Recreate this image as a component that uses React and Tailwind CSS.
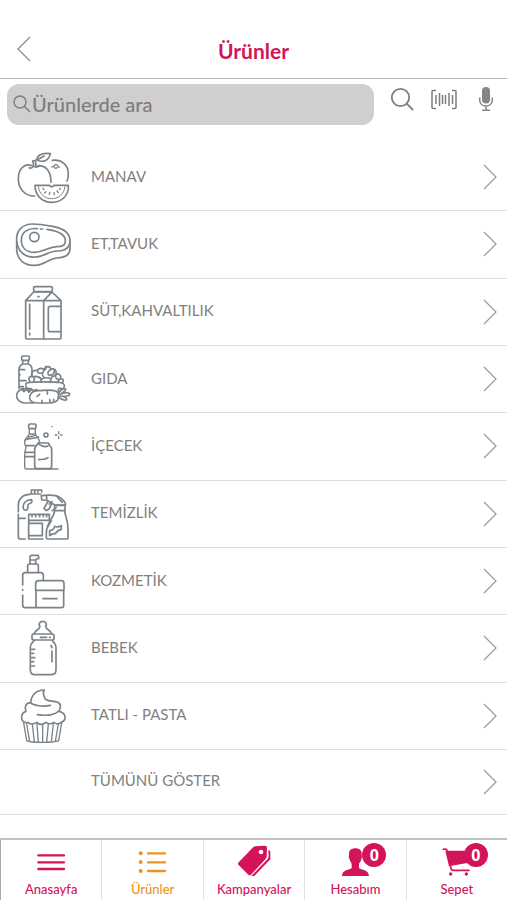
import React from "react";

function LineIcon({ viewBox, children }) {
  return (
    <svg
      viewBox={viewBox}
      className="w-20 h-[66px] shrink-0"
      fill="none"
      stroke="#7b8389"
      strokeWidth="5"
      strokeLinecap="round"
      strokeLinejoin="round"
      aria-hidden="true"
    >
      {children}
    </svg>
  );
}

const ManavIcon = () => (
  <LineIcon viewBox="0 9 240 198">
    <path d="M95 74c-24-9-40 13-40 39 0 30 20 53 49 52" />
    <path d="M112 76c24-6 41 14 41 48" />
    <path d="M88 80c5 3 11 1 12-7 5 8 13 6 18 0M101 74c-1-5-1-9-3-14l8-2c1 5 1 9 2 15" />
    <path d="M110 57c2-13 14-22 41-19-4 20-20 28-41 19zM110 57c8-3 16-8 22-12" />
    <path d="M157 58c28-4 48 15 48 40 0 9-1 16-4 22" />
    <path d="M156 78c7-1 7-7 12-8 5 1 4 6 10 9M164 79c1 4 6 4 7 0" strokeWidth="4" />
    <path d="M105 133h43c4 6 10 6 14 0h43c2 29-19 51-49 51-31 0-52-23-51-51z" />
    <path d="M115 137c3 22 18 36 40 36s37-14 40-36" strokeWidth="3" />
    <path d="M129 142l3 4M134 156l4-4M148 160l1-6M163 161l-1-6M175 155l-4-5M181 142l-3 4" strokeWidth="4" />
  </LineIcon>
);

const EtIcon = () => (
  <LineIcon viewBox="0 212 240 198">
    <path d="M50 301c-2-31 18-50 48-50 24 0 42 4 64 8 29 6 47 18 48 41 0 24-17 32-38 32-26 0-38 17-66 18-32 2-54-17-56-49z" />
    <path d="M50 304v24c2 30 22 48 54 47 31-1 41-20 67-22 25-2 39-8 39-30v-19" />
    <path d="M112 265c-29-3-48 12-48 33 0 25 16 38 40 38 30-1 41-17 67-17 17 0 26-5 25-19-1-20-27-29-55-33M121 266h7" />
    <circle cx="103" cy="290" r="14" />
  </LineIcon>
);

const SutIcon = () => (
  <LineIcon viewBox="0 8 240 198">
    <path d="M77 73l24-26h55l27 26v112q0 3-4 3H81q-4 0-4-4zM77 73h54h52" />
    <rect x="101" y="31" width="56" height="15" rx="4" />
    <path d="M131 73v115M131 73l24-25" />
    <path d="M181 90h-31q-5 0-5 6v64q0 6 5 6h31" />
    <path d="M89 84v75M89 170v6M114 61h3" />
  </LineIcon>
);

const GidaIcon = () => (
  <LineIcon viewBox="0 211 240 198">
    <rect x="65" y="241" width="23" height="13" rx="3" />
    <path d="M68 254v11c-6 3-11 8-11 15v59M85 254v11c7 3 11 8 11 17v18M68 265h17M58 282h16M58 315h20M58 333h12M57 297h3" />
    <path d="M78 323c5-6 104-6 111 0 7 5 5 16-4 17M78 323c-3 9 2 17 11 20" />
    <path d="M89 317c-5-9-2-15 7-15-4-12 6-21 16-17 4-9 16-9 20-2 5-14 20-12 20-2 12-4 19 4 16 13 10-1 16 6 14 14 9 1 10 8 5 14" />
    <path d="M97 304c13-4 21-2 27 7 9-5 21-6 30-1l-5 9M112 286c1 6 6 8 13 6M133 283c-8 11-8 16-1 22M153 282c-10 3-12 13-6 17 10 0 17-5 16-16M155 305l17-10M167 298c-2 10 4 15 14 12M123 310v9M101 318l3-12M137 272v9M181 310l-10 10" />
    <path d="M85 343c-13-8-35 0-35 17 0 13 11 22 24 22h26M64 339l8 9 7-8 7 9 10-8M64 339h29l7 6 11-3" />
    <path d="M112 345c-16 1-25 11-23 24 2 11 12 13 25 13h31c20 0 28-5 31-16 2-12-3-20-14-21-16-5-35 1-50 0z" />
    <path d="M126 374v7M149 372l2 8M111 362l8-6M142 347v8M161 371v6" />
    <path d="M174 354c9-12 18-17 23-14 3 6-9 10-17 16 14-6 29-6 29-1 0 6-15 8-27 6 12 2 20 6 18 11-5 5-18-3-26-8M175 346c0-7 4-11 8-7" />
  </LineIcon>
);

const IcecekIcon = () => (
  <LineIcon viewBox="0 8 240 198">
    <rect x="86" y="41" width="22" height="14" rx="4" />
    <path d="M88 55v15c-3 11-15 13-14 27 0 7 4 9 4 15-4 9-4 15-4 25v32q0 7 6 7h94M106 55v15c3 10 12 14 13 26M88 71h18M86 80l20-5" strokeWidth="4" />
    <path d="M76 88c12-6 26-2 40-8M77 106h28M75 126h28M75 139h28" />
    <path d="M114 98h31c2 8 10 10 10 20v49q0 8-7 8h-37q-7 0-7-8v-49c0-10 8-12 10-20zM114 98c4 9 21 13 30 9M116 148c11-1 21 0 28-6" />
    <circle cx="138" cy="74" r="6" />
    <path d="M176 64v6M176 79v6M166 74h5M181 74h5M155 49h1" strokeWidth="4" />
  </LineIcon>
);

const TemizlikIcon = () => (
  <LineIcon viewBox="0 211 240 198">
    <path d="M94 249v-11h31v6M104 240v6M114 240v5M94 250h28M55 303v-19c0-20 14-33 35-33M55 311v67q0 7 7 7h14M56 323h20" />
    <path d="M70 293c-3-14 8-26 24-26 2 0 3 8-1 10-9 2-10 6-10 16 0 7-11 8-13 0z" />
    <path d="M86 311h62v18H86zM86 329v55M96 312v6M107 312v6M119 312v6M130 312v6M140 312v6M86 338h41v37H87M86 385h43" />
    <path d="M124 255c25-3 43-3 55 5 10 7 18 12 18 23h-34c-12-12-22-16-38-15zM140 254v14M143 274l-11 19 7 7 8-5 9-17M148 280l8-7" />
    <path d="M164 284h31v16h-31zM173 260l14 15" />
    <path d="M164 300c-2 23-25 35-25 67v15q0 3 4 3h57q4 0 4-4v-25c0-30-8-35-10-56M169 290l-12 10M154 330l-11 19" />
    <path d="M149 375v-15c9-1 13-4 15-13 6 3 13 2 20-2v11c-9 2-14 6-18 13-5-1-11 1-17 6z" />
  </LineIcon>
);

const KozmetikIcon = () => (
  <LineIcon viewBox="0 8 240 198">
    <path d="M90 55V34q0-4 4-4h17q5 0 5 5v5q-9-1-9 5v10M90 44h16" />
    <path d="M83 80V61q0-5 5-5h22q5 0 5 5v19M68 119V90q0-8 8-8h46q8 0 8 8v15M68 133v2M68 149v29q0 9 9 9h30" />
    <path d="M107 135v-20q0-9 9-9h68q8 0 8 9v20zM108 135v46q0 6 7 6h69q7 0 7-7v-45M129 160h42" />
  </LineIcon>
);

const BebekIcon = () => (
  <LineIcon viewBox="0 211 240 198">
    <path d="M102 267c4-10 17-13 18-22-6-7 0-15 8-15s15 8 9 15c1 9 14 12 18 22" />
    <rect x="96" y="268" width="66" height="18" rx="5" />
    <path d="M102 287c-3 8-11 8-11 20v69q0 14 13 14h50q14 0 14-14v-69c0-12-8-12-11-20" />
    <path d="M121 278h19M149 278h2M95 314h9M95 326h6M95 339h9M95 351h6M95 364h9M156 319v32M153 302l3 7" />
  </LineIcon>
);

const TatliIcon = () => (
  <LineIcon viewBox="0 8 240 198">
    <path d="M75 126c-14-5-14-28 3-33-6-13 0-26 14-26 2-19 13-37 41-38-8 11 0 17 2 26 3 8 24 6 38 11 11 4 10 18 3 27 22 4 26 25 8 33-8 7-19 5-22 0-9 6-19 5-24 0-11 8-21 7-27 0-10 7-22 6-27 0-3 2-6 2-9 0z" />
    <path d="M92 67c8 9 37 13 59 8M112 103c27 4 49 2 63-10" />
    <path d="M71 128l9 53c11 7 83 7 96 0l9-53M80 131l9 52M97 131l6 54M111 131l4 55M128 132v54M145 131l-5 55M160 131l-6 54M175 131l-9 52" strokeWidth="4" />
  </LineIcon>
);

const categories = [
  { name: "MANAV", icon: ManavIcon },
  { name: "ET,TAVUK", icon: EtIcon },
  { name: "SÜT,KAHVALTILIK", icon: SutIcon },
  { name: "GIDA", icon: GidaIcon },
  { name: "İÇECEK", icon: IcecekIcon },
  { name: "TEMİZLİK", icon: TemizlikIcon },
  { name: "KOZMETİK", icon: KozmetikIcon },
  { name: "BEBEK", icon: BebekIcon },
  { name: "TATLI - PASTA", icon: TatliIcon },
];

function Chevron() {
  return (
    <svg viewBox="0 0 16 28" className="w-4 h-7 shrink-0" fill="none" stroke="#999" strokeWidth="1.2" aria-hidden="true">
      <path d="M2 2l12 12L2 26" />
    </svg>
  );
}

function CategoryLink({ name, icon: Icon, className }) {
  return (
    <a
      href="#"
      className={`flex items-center border-b border-[#dedede] pr-[9px] ${className}`}
    >
      {Icon ? <Icon /> : <span className="w-20 shrink-0" />}
      <span className="flex-1 pl-[11px] pb-[3px] text-[15px] leading-5 text-[#808080]">{name}</span>
      <Chevron />
    </a>
  );
}

function NavItem({ label, viewBox, badge, active, children }) {
  return (
    <a
      href="#"
      className={`flex-1 flex flex-col items-center border-l border-[#e2e2e2] first:border-[#aaa] ${active ? "text-[#ee9322]" : "text-[#d4145a]"}`}
    >
      <span className="relative">
        <svg viewBox={viewBox} className="w-12 h-9" fill="currentColor" aria-hidden="true">
          {children}
        </svg>
        {badge !== undefined && (
          <span className="absolute left-[31px] top-[3px] size-6 rounded-full bg-[#d4145a] text-white text-base leading-6 font-bold text-center font-['Open_Sans',sans-serif]">
            {badge}
          </span>
        )}
      </span>
      <span className="pt-px text-[13px] leading-6 font-medium">{label}</span>
    </a>
  );
}

export default function App() {
  return (
    <div className="min-h-screen flex flex-col bg-white font-['Lato','Open_Sans',sans-serif]">
      <header className="h-[79px] pt-6 pl-4 pr-4 flex items-center border-b border-[#b4b4b4]">
        <button type="button" aria-label="Geri" className="w-4 pb-1">
          <svg viewBox="0 0 16 28" className="w-4 h-7" fill="none" stroke="#8c8c8c" strokeWidth="1.3">
            <path d="M14 2L2 14l12 12" />
          </svg>
        </button>
        <h1 className="flex-1 pr-4 text-center text-[21px] leading-6 font-bold text-[#d4145a]">Ürünler</h1>
      </header>

      <div className="flex items-start gap-4 pt-[5px] pb-[19px] pl-[7px] pr-[9px]">
        <label className="flex-1 min-w-0 h-[41px] flex items-center rounded-xl bg-[#d0cece] pl-[5px] pb-[2px] text-[#7c7c7c]">
          <svg viewBox="0 0 20 20" className="size-5 shrink-0" fill="none" stroke="currentColor" strokeWidth="1.4" aria-hidden="true">
            <circle cx="8" cy="8" r="6" />
            <path d="M12.500 12.500l5.500 5.500" />
          </svg>
          <input
            type="search"
            aria-label="Ürünlerde ara"
            placeholder="Ürünlerde ara"
            className="flex-1 min-w-0 bg-transparent text-xl leading-6 font-medium outline-none placeholder:text-[#7c7c7c]"
          />
        </label>
        <div className="flex gap-4 pt-[3px]">
          <button type="button" aria-label="Ara">
            <svg viewBox="0 0 24 24" className="size-6" fill="none" stroke="#7b7f82" strokeWidth="1.8">
              <circle cx="10.500" cy="10.500" r="8.700" />
              <path d="M16.700 16.700l6.500 6.500" />
            </svg>
          </button>
          <button type="button" aria-label="Barkod okut">
            <svg viewBox="0 0 28 24" className="w-7 h-6" fill="none" stroke="#7b7f82" strokeWidth="1.500">
              <path d="M6 3.500H3q-1 0-1 1v16q0 1 1 1h3M22 3.500h3q1 0 1 1v16q0 1-1 1h-3" />
              <path d="M6 8v9M9.500 6v13M12.500 8v9M15.500 8v9M19 6v13M22.500 8v9" />
            </svg>
          </button>
          <button type="button" aria-label="Sesli arama">
            <svg viewBox="0 0 24 24" className="size-6" fill="none" stroke="#888384" strokeWidth="1.500">
              <rect x="8" y="0" width="8" height="16.500" rx="4" fill="#888384" stroke="none" />
              <path d="M5.700 10.500v2.500c0 8 12.600 8 12.600 0v-2.500M12 19v4M8 23.300h8" />
            </svg>
          </button>
        </div>
      </div>

      <main className="flex-1 flex flex-col">
        {categories.map((category) => (
          <CategoryLink key={category.name} name={category.name} icon={category.icon} className="flex-1" />
        ))}
        <CategoryLink name="TÜMÜNÜ GÖSTER" className="h-[65px]" />
      </main>

      <nav className="mt-[23px] h-[62px] flex border-t-2 border-[#c0c0c0]">
        <NavItem label="Anasayfa" viewBox="84 30 144 108">
          <path d="M118 76h77M118 97h77M118 117h77" stroke="currentColor" strokeWidth="7" strokeLinecap="round" />
        </NavItem>
        <NavItem label="Ürünler" viewBox="387 30 144 108" active>
          <path d="M444 70h51M444 97h51M444 123h51" stroke="currentColor" strokeWidth="7" strokeLinecap="round" />
          <circle cx="422" cy="70" r="6" />
          <circle cx="422" cy="96" r="6" />
          <circle cx="422" cy="123" r="6" />
        </NavItem>
        <NavItem label="Kampanyalar" viewBox="90 30 144 108">
          <path
            fillRule="evenodd"
            d="M166 49l29-2q6 0 6 6l-1 26q0 5-4 9l-43 46q-4 4-8 0l-29-29q-4-4 0-8l42-44q3-3 8-4zM183 59a7 7 0 1 0 0 14a7 7 0 1 0 0-14z"
          />
          <path d="M205 60q6 1 6 6v22l-52 54q-5 4-9 0l53-55q3-4 3-8z" />
        </NavItem>
        <NavItem label="Hesabım" viewBox="393 30 144 108" badge={0}>
          <path d="M447 74c-1-13 7-19 19-19s20 6 19 19l1 6-3 12-6 9v13c7 6 29 5 30 24h-81c0-19 23-18 29-24v-13l-5-9-4-12z" />
        </NavItem>
        <NavItem label="Sepet" viewBox="698 30 144 108" badge={0}>
          <path d="M735 62h75l-9 37-55 10z" />
          <path d="M729 58l7-1q3 0 4 4l12 54q1 6 8 6h46" fill="none" stroke="currentColor" strokeWidth="5" strokeLinecap="round" />
          <circle cx="751" cy="132" r="5" />
          <circle cx="798" cy="132" r="5" />
        </NavItem>
      </nav>
    </div>
  );
}
